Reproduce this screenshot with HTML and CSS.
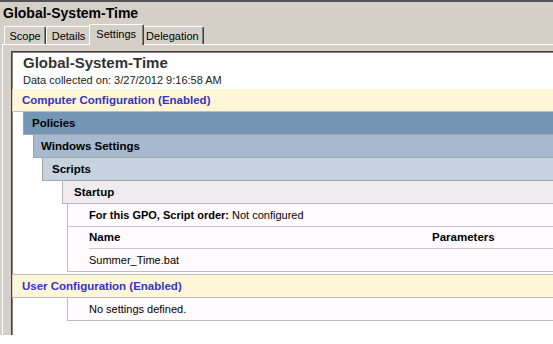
FILE: index.html
```html
<!DOCTYPE html>
<html lang="en">
<head>
    <meta charset="UTF-8">
    <meta name="viewport" content="width=device-width, initial-scale=1.0">
    <title>Global-System-Time</title>
    <link rel="stylesheet" href="styles.css">
</head>
<body>
    <div class="window">
        <div class="gpo-title">Global-System-Time</div>
        <div class="tabs">
            <div class="tab">Scope</div>
            <div class="tab">Details</div>
            <div class="tab active">Settings</div>
            <div class="tab">Delegation</div>
        </div>
        <div class="tab-panel">
            <div class="report">
                <div class="report-title">Global-System-Time</div>
                <div class="report-date">Data collected on: 3/27/2012 9:16:58 AM</div>

                <div class="category">
                    <div class="category-bar">Computer Configuration (Enabled)</div>
                    <div class="level level-1">
                        <div class="bar">Policies</div>
                        <div class="level level-2">
                            <div class="bar">Windows Settings</div>
                            <div class="level level-3">
                                <div class="bar">Scripts</div>
                                <div class="level level-4">
                                    <div class="bar">Startup</div>
                                    <div class="box">
                                        <div class="box-row"><b>For this GPO, Script order:</b> Not configured</div>
                                        <div class="script-table">
                                            <div class="table-head">
                                                <div class="col-name">Name</div>
                                                <div class="col-params">Parameters</div>
                                            </div>
                                            <div class="table-row">
                                                <div class="col-name">Summer_Time.bat</div>
                                                <div class="col-params"></div>
                                            </div>
                                        </div>
                                    </div>
                                </div>
                            </div>
                        </div>
                    </div>
                </div>

                <div class="category">
                    <div class="category-bar">User Configuration (Enabled)</div>
                    <div class="box user-box">
                        <div class="box-row">No settings defined.</div>
                    </div>
                </div>
            </div>
        </div>
    </div>
</body>
</html>
```

FILE: styles.css
```css
html {
    background-color: #fff;
}

body {
    margin: 0;
    font-family: "Liberation Sans", Arial, sans-serif;
    font-size: 11px;
    color: #000;
}

.window {
    height: 333px;
    display: flex;
    flex-direction: column;
    background-color: #d4d0c8;
    border-top: 2px solid #555;
}

.gpo-title {
    padding: 1px 3px 0;
    font-size: 14px;
    font-weight: bold;
    line-height: 20px;
}

.tabs {
    display: flex;
    align-items: flex-end;
    height: 21px;
    padding-left: 4px;
}

.tab {
    padding: 1px 4.5px 0;
    line-height: 16px;
    border-top: 1px solid #fff;
    border-left: 1px solid #fff;
    border-right: 1px solid #404040;
    border-radius: 2px 2px 0 0;
    box-shadow: inset -1px 0 0 #808080;
}

.tab.active {
    position: relative;
    z-index: 1;
    margin: 0 -2px -1px;
    padding: 1px 6.5px 3px;
    background-color: #d4d0c8;
}

.tab.active + .tab {
    border-left: none;
}

.tab-panel {
    flex: 1;
    display: flex;
    margin-left: 2px;
    padding: 6px 0 0 8px;
    border-top: 1px solid #fff;
    border-left: 1px solid #fff;
}

.report {
    flex: 1;
    background-color: #fff;
    border-top: 1px solid #404040;
    border-left: 1px solid #404040;
    box-shadow: inset 1px 1px 0 #808080;
}

.report-title {
    padding: 2px 0 0 11px;
    font-size: 15px;
    font-weight: bold;
    line-height: 18px;
    color: #333;
}

.report-date {
    margin: 1px 0 2px;
    padding-left: 11px;
    line-height: 14px;
    color: #222;
}

.category-bar {
    height: 22px;
    padding-left: 9px;
    line-height: 22px;
    font-size: 11.5px;
    font-weight: bold;
    color: #3333c8;
    background-color: #fff6d8;
    border-left: 1px solid #d0ccc0;
    border-bottom: 1px solid #bdbdbd;
}

.category + .category {
    margin-top: 2px;
}

.category + .category .category-bar {
    border-top: 1px solid #bdbdbd;
}

.bar {
    height: 22px;
    line-height: 22px;
    font-size: 11.5px;
    font-weight: bold;
    border-left: 1px solid #a0a0a0;
    border-bottom: 1px solid #a4a8ac;
}

.level-1 {
    margin-left: 11px;
}

.level-1 > .bar {
    padding-left: 8px;
    background-color: #7396b4;
}

.level-2 {
    margin-left: 10px;
}

.level-2 > .bar {
    padding-left: 7px;
    background-color: #a6b9cf;
}

.level-3 {
    margin-left: 9px;
}

.level-3 > .bar {
    padding-left: 9px;
    background-color: #c6d2de;
}

.level-4 {
    margin-left: 20px;
}

.level-4 > .bar {
    padding-left: 11px;
    background-color: #efebef;
    border-left-color: #b8b8b8;
    border-bottom-color: #b8b8b8;
}

.box {
    margin-left: 5px;
    background-color: #fffbfe;
    border-left: 1px solid #bdbdbd;
    border-bottom: 1px solid #bdbdbd;
}

.user-box {
    margin-left: 55px;
}

.box-row {
    padding-left: 21px;
    line-height: 22px;
}

.box-row + .script-table {
    border-top: 1px solid #c4c4c4;
}

.script-table {
    padding-left: 21px;
}

.table-head,
.table-row {
    display: flex;
    line-height: 22px;
}

.table-head {
    font-weight: bold;
    font-size: 11.5px;
    line-height: 21px;
    border-bottom: 1px solid #c8c8c8;
}

.col-name {
    width: 343px;
}
```
